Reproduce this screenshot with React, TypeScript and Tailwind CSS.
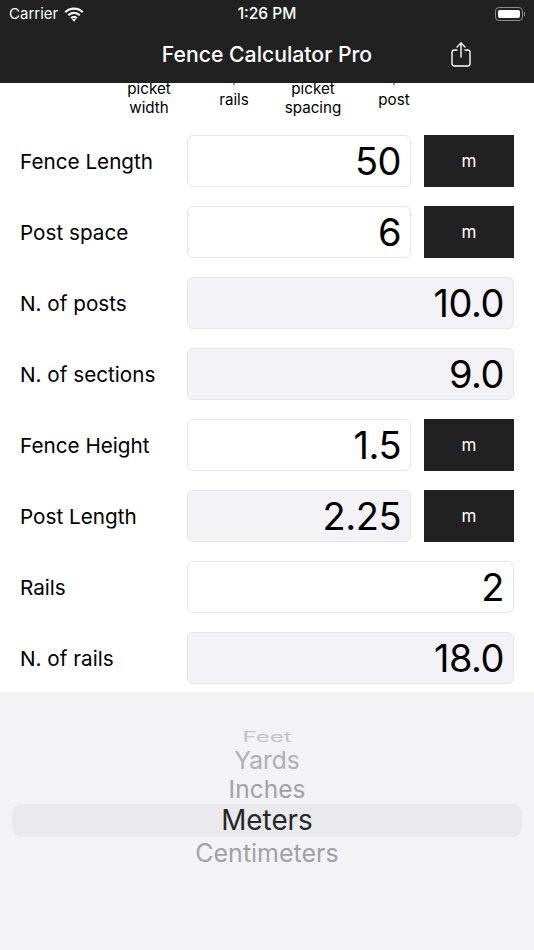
const font = "font-['Inter','Liberation_Sans',sans-serif]";

const rows = [
  { label: "Fence Length", value: "50", unit: "m" },
  { label: "Post space", value: "6", unit: "m" },
  { label: "N. of posts", value: "10.0", result: true },
  { label: "N. of sections", value: "9.0", result: true },
  { label: "Fence Height", value: "1.5", unit: "m" },
  { label: "Post Length", value: "2.25", unit: "m", result: true },
  { label: "Rails", value: "2" },
  { label: "N. of rails", value: "18.0", result: true },
];

function Wifi() {
  return (
    <svg width="20" height="15" viewBox="0 0 20 15" fill="none" stroke="white" strokeWidth="2.2">
      <path d="M1.2 5.2a12.6 12.6 0 0 1 17.6 0" />
      <path d="M4.2 8.3a8.3 8.3 0 0 1 11.6 0" />
      <path d="M7.2 11.2a4 4 0 0 1 5.6 0" />
      <path d="M10 14.8l-2-2.2a3 3 0 0 1 4 0z" fill="white" stroke="none" />
    </svg>
  );
}

function Battery() {
  return (
    <div className="flex items-center">
      <div className="h-[14px] w-[28px] rounded-[4px] border border-[#8a8a8a] p-[2px]">
        <div className="h-full w-full rounded-[2px] bg-white" />
      </div>
      <div className="ml-[1px] h-[4px] w-[1px] bg-[#8a8a8a]" />
    </div>
  );
}

function ShareIcon() {
  return (
    <svg width="20" height="25" viewBox="0 0 20 25" fill="none" stroke="white" strokeWidth="1.4" strokeLinecap="round" strokeLinejoin="round">
      <path d="M6 8H3.5A2.5 2.5 0 0 0 1 10.5v11A2.5 2.5 0 0 0 3.5 24h13a2.5 2.5 0 0 0 2.5-2.5v-11A2.5 2.5 0 0 0 16.500 8H14" />
      <path d="M10 15V1" />
      <path d="M6 5l4-4 4 4" />
    </svg>
  );
}

function Header() {
  return (
    <div className="relative z-10 h-[83px] bg-[#212121] text-white">
      <div className="grid h-[28px] grid-cols-3 items-center pl-[9px] pr-[9px]">
        <div className="flex items-center gap-[6px] text-[15px]">
          <span>Carrier</span>
          <Wifi />
        </div>
        <span className="text-center text-[15.500px] font-medium">1:26 PM</span>
        <div className="flex justify-end">
          <Battery />
        </div>
      </div>
      <div className="relative flex h-[54px] items-center justify-center">
        <span className="text-[21.200px] font-medium">Fence Calculator Pro</span>
        <div className="absolute right-[63px] top-[14px]">
          <ShareIcon />
        </div>
      </div>
    </div>
  );
}

function Tabs() {
  return (
    <div className="flex h-[52px] items-center overflow-hidden pb-[22px] text-center text-[15.200px] leading-[19px] text-black">
      <div className="ml-[119px] w-[60px]">picket<br />width</div>
      <div className="ml-[25px] w-[60px]"><span className="text-[9px]">,</span><br />rails<br />&nbsp;</div>
      <div className="ml-[19px] w-[60px]">picket<br />spacing</div>
      <div className="ml-[21px] w-[60px]"><span className="text-[9px]">,</span><br />post<br />&nbsp;</div>
    </div>
  );
}

function Row({ label, value, unit, result }: { label: string; value: string; unit?: string; result?: boolean }) {
  return (
    <div className="flex h-[52px] items-center pl-[20px] pr-[20px]">
      <div className="w-[167px] pt-[2px] text-[20.700px] text-black">{label}</div>
      <div
        className={`flex h-full flex-1 items-center justify-end rounded-[6px] border border-[#e6e6ea] pr-[9px] pt-[1px] text-[38px] tracking-[-0.5px] text-black ${
          result ? "bg-[#f2f2f7]" : "bg-white"
        }`}
      >
        {value}
      </div>
      {unit && (
        <div className="ml-[13px] flex h-full w-[90px] items-center justify-center bg-[#212121] pt-[1px] text-[17px] text-white">
          {unit}
        </div>
      )}
    </div>
  );
}

function Picker() {
  return (
    <div className="mt-[8px] flex h-[258px] flex-col items-center bg-[#f2f2f7] pt-[35px]">
      <div className="h-[20px] text-[24px] leading-[20px] text-[#c4c4c8] [transform:scaleY(0.6)]">Feet</div>
      <div className="-mt-[1px] h-[28px] text-[24.500px] leading-[28px] text-[#b0b0b4]">Yards</div>
      <div className="h-[30px] text-[24.500px] leading-[30px] text-[#a2a2a6]">Inches</div>
      <div className="flex h-[33px] w-[510px] items-center justify-center rounded-[9px] bg-[#e9e9ee] pt-[1px] text-[27.800px] text-[#262626]">
        Meters
      </div>
      <div className="h-[32px] text-[25px] leading-[32px] text-[#a2a2a6]">Centimeters</div>
    </div>
  );
}

export default function App() {
  return (
    <div className={`h-[950px] w-[534px] overflow-hidden bg-white ${font}`}>
      <Header />
      <Tabs />
      <div className="flex flex-col gap-[19px]">
        {rows.map((row) => (
          <Row key={row.label} {...row} />
        ))}
      </div>
      <Picker />
    </div>
  );
}
